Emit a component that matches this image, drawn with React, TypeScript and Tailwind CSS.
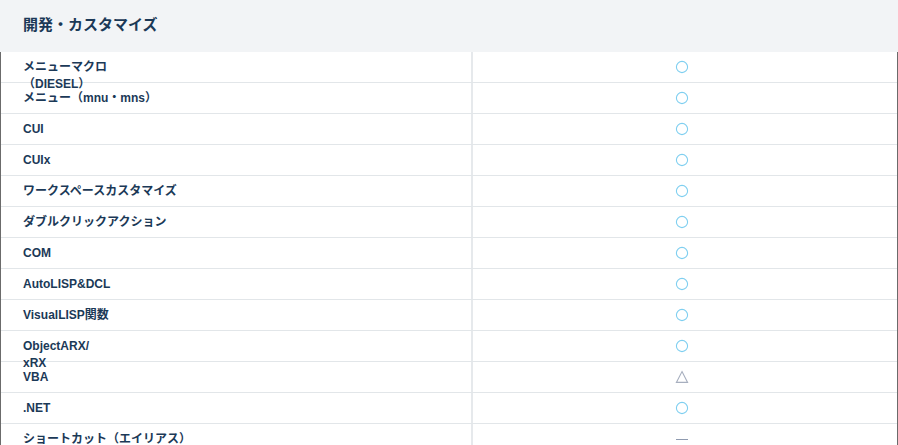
import React from 'react';

type Mark = 'circle' | 'triangle' | 'dash';

const rows: { label: React.ReactNode; mark: Mark }[] = [
  { label: <>メニューマクロ<br />（DIESEL）</>, mark: 'circle' },
  { label: 'メニュー（mnu・mns）', mark: 'circle' },
  { label: 'CUI', mark: 'circle' },
  { label: 'CUIx', mark: 'circle' },
  { label: 'ワークスペースカスタマイズ', mark: 'circle' },
  { label: 'ダブルクリックアクション', mark: 'circle' },
  { label: 'COM', mark: 'circle' },
  { label: 'AutoLISP&DCL', mark: 'circle' },
  { label: 'VisualLISP関数', mark: 'circle' },
  { label: <>ObjectARX/<br />xRX</>, mark: 'circle' },
  { label: 'VBA', mark: 'triangle' },
  { label: '.NET', mark: 'circle' },
  { label: 'ショートカット（エイリアス）', mark: 'dash' },
];

function MarkIcon({ mark }: { mark: Mark }) {
  if (mark === 'circle') {
    return (
      <svg width="14" height="14" viewBox="0 0 14 14">
        <circle cx="7" cy="7" r="5.6" fill="none" stroke="#7fcff0" strokeWidth="1.1" />
      </svg>
    );
  }
  if (mark === 'triangle') {
    return (
      <svg width="14" height="14" viewBox="0 0 14 14">
        <path d="M7 1.6 L12.6 12.4 L1.4 12.4 Z" fill="none" stroke="#a7afbf" strokeWidth="1.1" />
      </svg>
    );
  }
  return <div className="w-[12px] h-[1px] bg-[#8f9bb0]" />;
}

export default function App() {
  return (
    <div
      className="w-[898px] h-[445px] overflow-hidden bg-white text-[#1b3957]"
      style={{ fontFamily: '"Liberation Sans", "Noto Sans CJK JP", sans-serif' }}
    >
      {/* section header */}
      <div className="h-[52px] bg-[#f2f4f6] flex items-center pl-[23px] pb-[1px]">
        <h2 className="text-[15px] font-bold">開発・カスタマイズ</h2>
      </div>

      {/* table */}
      <div className="border-l border-r border-[#6b6b6b]">
        {rows.map((r, i) => (
          <div key={i} className="flex h-[31px] border-b border-[#e2e6e9]">
            <div className="w-[472px] h-full shrink-0 border-r-2 border-[#e6e9ec] pl-[22px] pt-[7px] text-[12px] font-bold leading-[17px] whitespace-nowrap relative z-10">
              {r.label}
            </div>
            <div className="flex-1 h-full flex items-center justify-center pr-[7px]">
              <MarkIcon mark={r.mark} />
            </div>
          </div>
        ))}
      </div>
    </div>
  );
}
